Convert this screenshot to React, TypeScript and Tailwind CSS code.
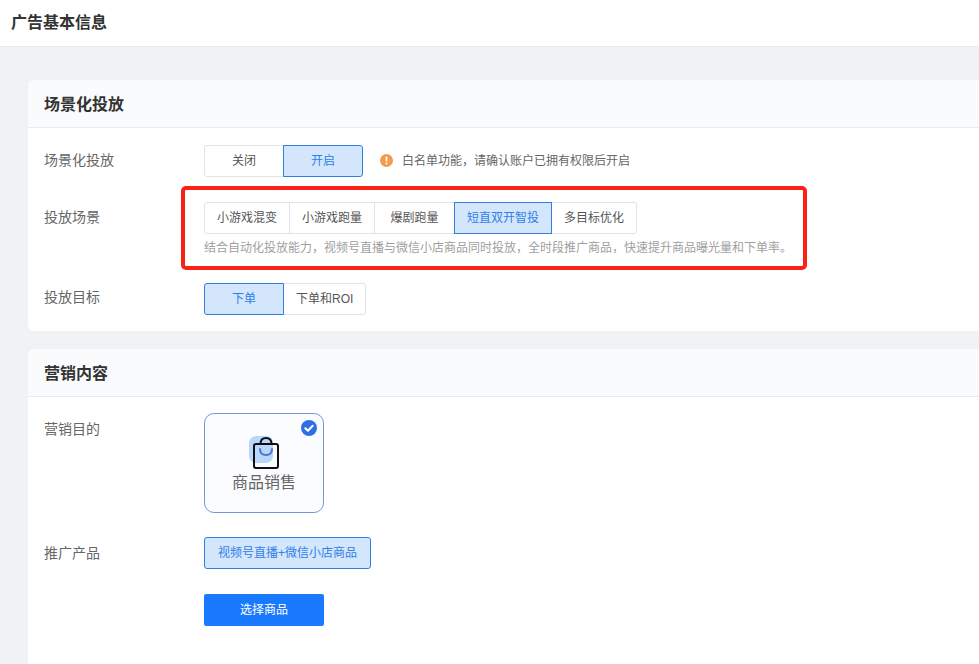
import React from 'react';

const FONT = "font-['Liberation_Sans','Noto_Sans_CJK_SC',sans-serif]";

function Segment({ items, active, wide }: { items: string[]; active: string; wide?: string }) {
  return (
    <div className="flex h-8 w-fit">
      {items.map((item) => {
        const on = item === active;
        return (
          <div
            key={item}
            className={`relative -ml-px first:ml-0 flex h-8 items-center justify-center border px-3 text-xs first:rounded-l-[3px] last:rounded-r-[3px] ${
              item === wide ? 'min-w-[81px]' : 'min-w-[80px]'
            } ${on ? 'z-10 border-[#2f7fe0] bg-[#d3e6fc] text-[#2f80e8]' : 'border-[#e0e2e6] bg-white text-[#555]'}`}
          >
            {item}
          </div>
        );
      })}
    </div>
  );
}

function Label({ children, className }: { children: React.ReactNode; className?: string }) {
  return <div className={`w-40 shrink-0 text-sm leading-[30px] text-[#666] ${className ?? ''}`}>{children}</div>;
}

function Card({ title, className, children }: { title: string; className?: string; children: React.ReactNode }) {
  return (
    <section className={`w-[1000px] rounded-t-md bg-white ${className ?? ''}`}>
      <div className="flex h-12 items-center rounded-t-md border-b border-[#e8eaee] bg-[#fafbfc] px-4 pt-[2px] text-base font-bold text-[#333]">
        {title}
      </div>
      {children}
    </section>
  );
}

function BagIcon() {
  return (
    <svg width="32" height="36" viewBox="0 0 32 36" fill="none">
      <rect x="1" y="1" width="24" height="27" rx="7" fill="#b9d7fb" />
      <rect x="6" y="9" width="24" height="24" rx="2" stroke="#111" strokeWidth="2" />
      <path d="M12.500 9c0-4 2-6 5.500-6s5.500 2 5.500 6" stroke="#111" strokeWidth="2" />
      <path d="M12 14c0 4 2 6 6 6s6-2 6-6" stroke="#4f78d0" strokeWidth="2" strokeLinecap="round" />
    </svg>
  );
}

export default function App() {
  return (
    <div className={`${FONT} relative h-[664px] w-[979px] overflow-hidden bg-[#f0f2f5]`}>
      <header className="flex h-[47px] items-center border-b border-[#e8eaee] bg-white pb-px pl-[11px] text-base font-bold text-[#333]">
        广告基本信息
      </header>

      <div className="pl-7 pt-[33px]">
        <Card title="场景化投放" className="rounded-b-md">
          <div className="px-4 pb-4 pt-[17px]">
            <div className="mb-[25px] flex">
              <Label>场景化投放</Label>
              <Segment items={['关闭', '开启']} active="开启" />
              <div className="ml-[17px] flex items-center text-xs text-[#666]">
                <svg width="13" height="13" viewBox="0 0 13 13" className="mr-[9px] -mt-px">
                  <circle cx="6.500" cy="6.500" r="6.500" fill="#f39a4c" />
                  <rect x="5.600" y="2.600" width="1.800" height="5" rx="0.900" fill="#fff" />
                  <circle cx="6.500" cy="9.500" r="1" fill="#fff" />
                </svg>
                白名单功能，请确认账户已拥有权限后开启
              </div>
            </div>

            <div className="mb-[25px] flex">
              <Label>投放场景</Label>
              <div>
                <Segment
                  items={['小游戏混变', '小游戏跑量', '爆剧跑量', '短直双开智投', '多目标优化']}
                  active="短直双开智投"
                  wide="爆剧跑量"
                />
                <p className="mt-1 text-xs leading-5 text-[#a0a0a0]">
                  结合自动化投放能力，视频号直播与微信小店商品同时投放，全时段推广商品，快速提升商品曝光量和下单率。
                </p>
              </div>
            </div>

            <div className="flex">
              <Label className="-mt-px">投放目标</Label>
              <Segment items={['下单', '下单和ROI']} active="下单" />
            </div>
          </div>
        </Card>

        <Card title="营销内容" className="mt-[18px] h-[400px]">
          <div className="px-4 pt-4">
            <div className="mb-6 flex">
              <Label className="mt-px">营销目的</Label>
              <div className="relative flex h-[100px] w-[120px] flex-col items-center rounded-[10px] border border-[#6f9ad8] bg-[#fbfcff] pt-[21px]">
                <BagIcon />
                <div className="text-base leading-6 text-[#666]">商品销售</div>
                <svg width="16" height="16" viewBox="0 0 16 16" className="absolute right-[6px] top-[6px]">
                  <circle cx="8" cy="8" r="8" fill="#2f6fe4" />
                  <path d="M4.300 8.200l2.600 2.500 4.800-5" fill="none" stroke="#fff" strokeWidth="2" strokeLinecap="round" strokeLinejoin="round" />
                </svg>
              </div>
            </div>

            <div className="mb-[25px] flex">
              <Label className="mt-px">推广产品</Label>
              <div className="flex h-8 items-center rounded-[3px] border border-[#2f7fe0] bg-[#d3e6fc] px-[13px] text-xs text-[#2f80e8]">
                视频号直播+微信小店商品
              </div>
            </div>

            <div className="flex">
              <div className="w-40 shrink-0" />
              <button className="h-8 w-[120px] rounded-[2px] bg-[#1a7aff] text-xs text-white">选择商品</button>
            </div>
          </div>
        </Card>
      </div>

      {/* red annotation drawn over the screenshot */}
      <div className="pointer-events-none absolute left-[181px] top-[186px] h-[84px] w-[626px] rounded-[5px] border-[4px] border-[#fb2116]" />
    </div>
  );
}
